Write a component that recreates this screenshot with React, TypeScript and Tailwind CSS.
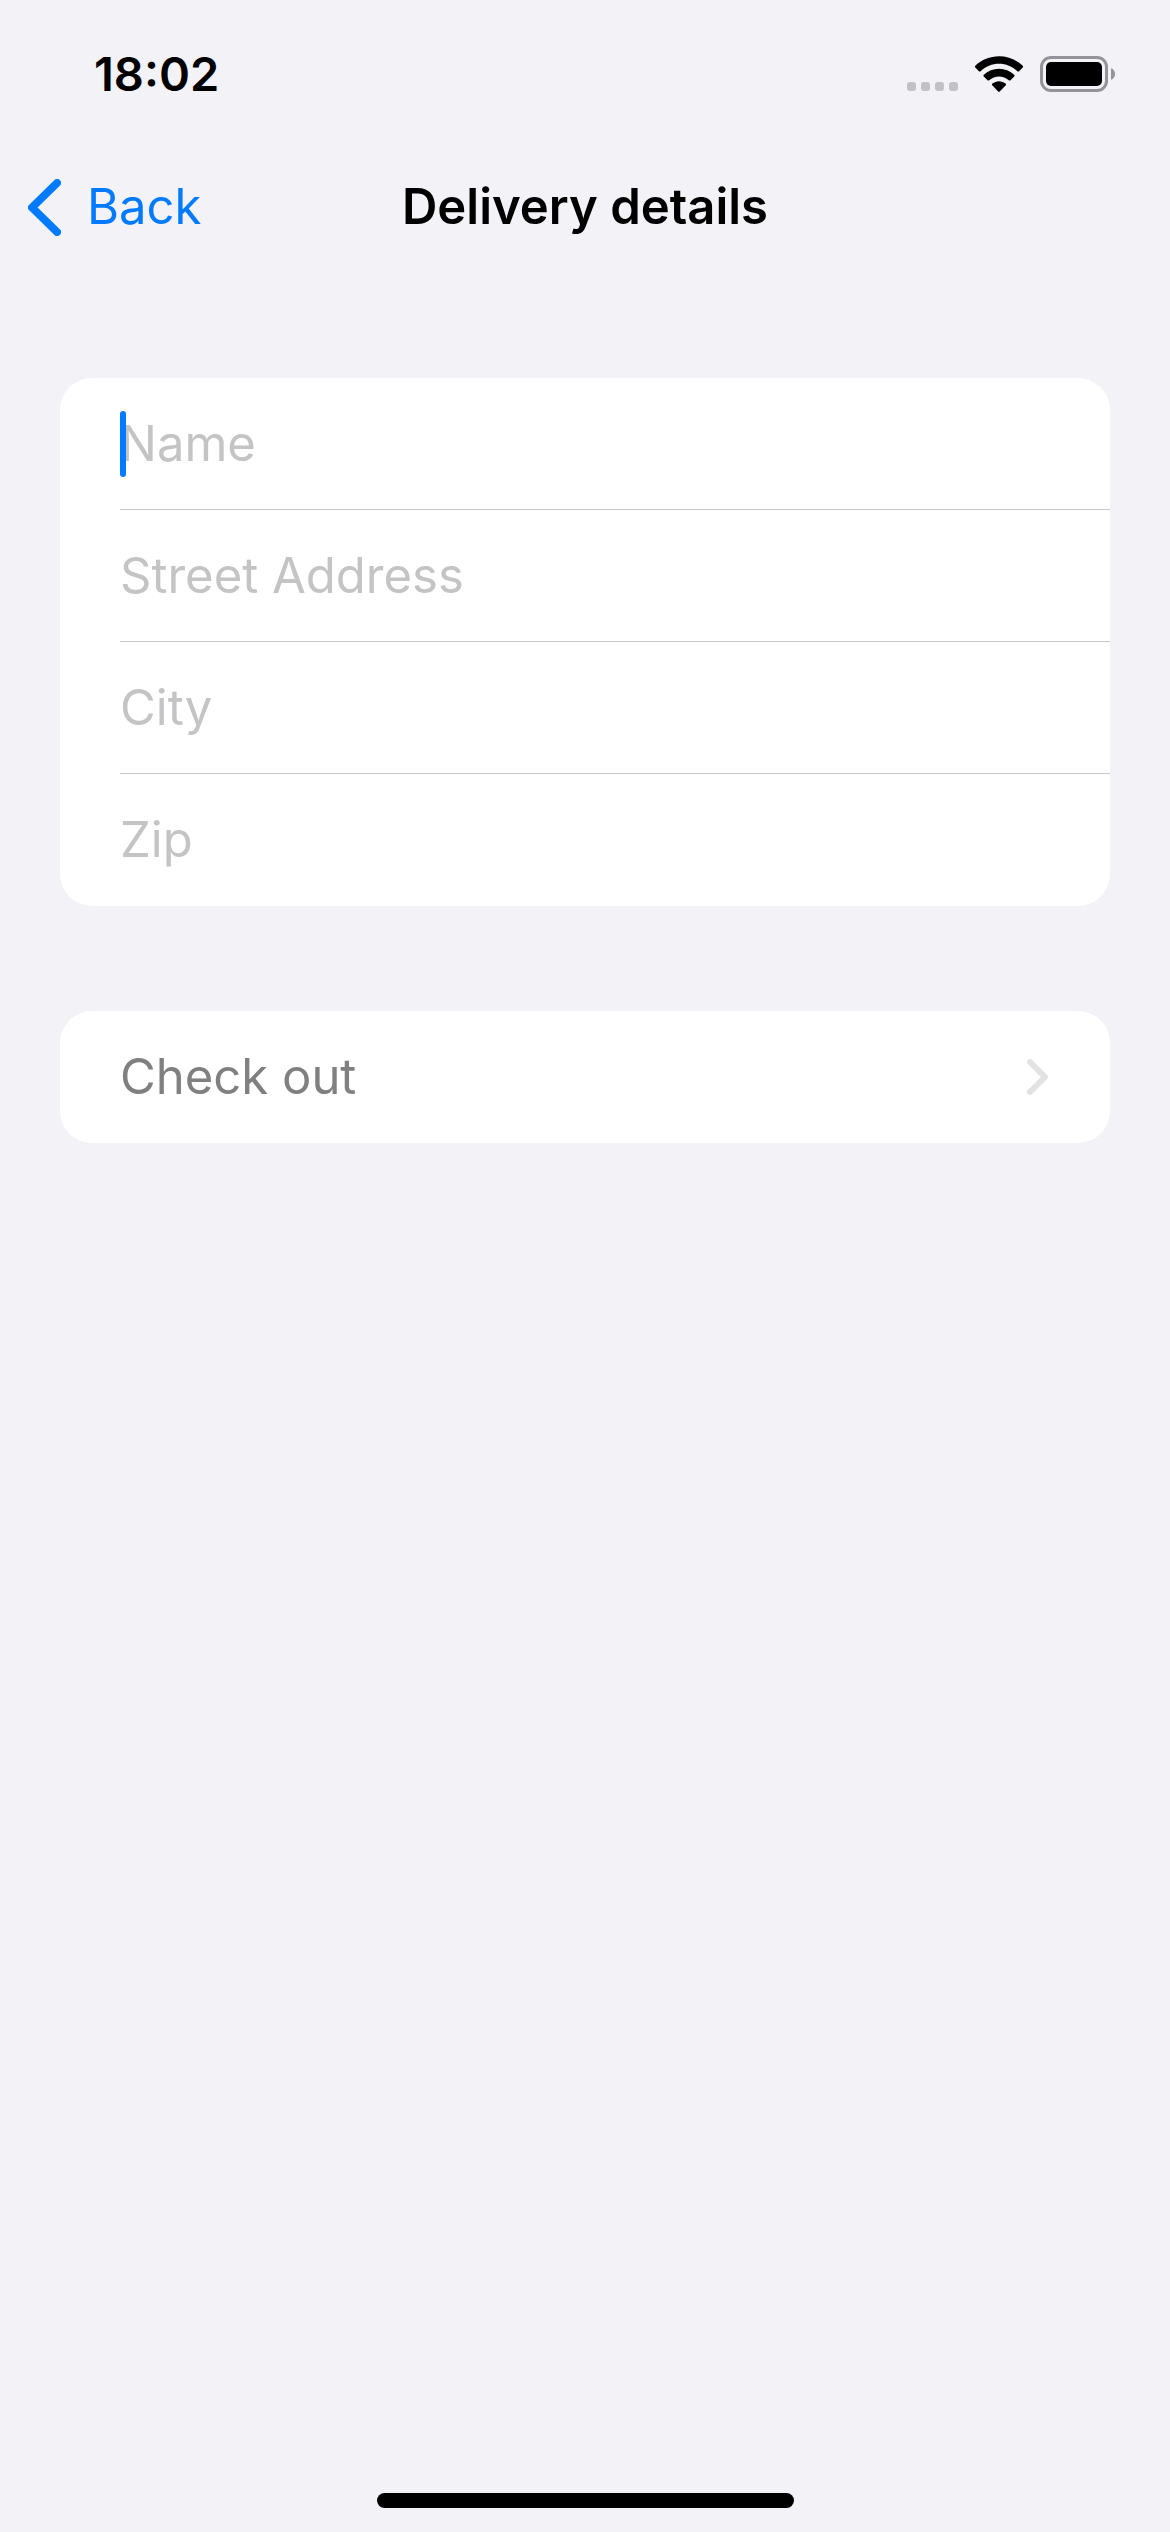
import { useState } from "react";

const fields = [
  { id: "name", label: "Name" },
  { id: "street", label: "Street Address" },
  { id: "city", label: "City" },
  { id: "zip", label: "Zip" },
];

function StatusBar() {
  return (
    <header className="flex h-[148px] items-center justify-between pl-[94px] pr-[54px]">
      <time className="text-[47px] leading-[58px] font-semibold">18:02</time>
      <div className="flex items-center">
        <svg width="52" height="36" viewBox="0 0 52 36" fill="#c2c1c6" className="mr-4" aria-label="No signal">
          <rect x="0" y="26" width="9" height="9" rx="3" />
          <rect x="14" y="26" width="9" height="9" rx="3" />
          <rect x="28" y="26" width="9" height="9" rx="3" />
          <rect x="42" y="26" width="9" height="9" rx="3" />
        </svg>
        <svg width="48" height="36" viewBox="0 0 48 36" className="mr-[17px]" aria-label="Wi-Fi">
          <path
            d="M24 0.2C33 0.2 41.400 3.600 47.700 9.700C48.200 10.200 48.200 11 47.700 11.500L44.100 15.200C43.600 15.700 42.900 15.700 42.400 15.200C37.300 10.400 30.900 7.800 24 7.800C17.100 7.800 10.700 10.400 5.600 15.200C5.100 15.700 4.400 15.700 3.900 15.200L0.300 11.500C-0.200 11-0.200 10.200 0.300 9.700C6.600 3.600 15 0.200 24 0.200Z"
          />
          <path d="M24 12.700C29.700 12.700 35.100 14.900 39.200 18.700C39.700 19.200 39.700 20 39.200 20.500L35.500 24.200C35 24.700 34.300 24.700 33.800 24.200C31.100 21.800 27.600 20.400 24 20.400C20.400 20.400 16.900 21.800 14.200 24.200C13.700 24.700 13 24.700 12.500 24.200L8.800 20.500C8.300 20 8.300 19.200 8.800 18.700C12.900 14.900 18.300 12.700 24 12.700Z" />
          <path d="M24 25.200C26.400 25.200 28.700 26.100 30.600 27.600C31.100 28.100 31.100 28.800 30.700 29.300L24.800 35.400C24.300 35.900 23.700 35.900 23.200 35.400L17.300 29.300C16.900 28.800 16.900 28.100 17.400 27.600C19.300 26.100 21.600 25.200 24 25.200Z" />
        </svg>
        <svg width="76" height="36" viewBox="0 0 76 36" aria-label="Battery full">
          <rect x="1.500" y="1.500" width="65" height="33" rx="9.500" fill="none" stroke="#949397" strokeWidth="3" />
          <rect x="6" y="6" width="56" height="24" rx="5" />
          <path d="M71 12.200C73.500 13 75 15.300 75 18C75 20.700 73.500 23 71 23.800Z" fill="#949397" />
        </svg>
      </div>
    </header>
  );
}

export default function App() {
  const [values, setValues] = useState<Record<string, string>>({});

  return (
    <div className="flex min-h-screen flex-col bg-[#f2f2f7] font-['Inter',sans-serif] text-[49px] leading-[60px] text-black">
      <StatusBar />

      <nav className="grid h-[118px] grid-cols-[1fr_auto_1fr] items-center">
        <button type="button" className="flex items-center gap-[26px] justify-self-start pl-7 text-[#007aff]">
          <svg width="33" height="57" viewBox="0 0 33 57" fill="none" stroke="currentColor" strokeWidth="8" strokeLinecap="round" strokeLinejoin="round" aria-hidden="true">
            <path d="M29 4L4 28.500L29 53" />
          </svg>
          Back
        </button>
        <h1 className="font-semibold">Delivery details</h1>
      </nav>

      <main className="flex flex-1 flex-col gap-[105px] px-[60px] pt-28">
        <form className="overflow-hidden rounded-[32px] bg-white pl-[60px]">
          {fields.map(({ id, label }, index) => (
            <div key={id} className="relative flex h-[132px] items-center border-b border-[#c6c6c8] last:border-b-0">
              <input
                id={id}
                type="text"
                aria-label={label}
                placeholder={label}
                value={values[id] ?? ""}
                onChange={(e) => setValues({ ...values, [id]: e.target.value })}
                className="w-full bg-transparent caret-[#007aff] outline-none placeholder:text-[#c4c4c6]"
              />
              {index === 0 && !values[id] && (
                <span className="absolute left-0 h-[66px] w-1.5 rounded-full bg-[#007aff]" aria-hidden="true" />
              )}
            </div>
          ))}
        </form>

        <button type="button" disabled className="flex h-[132px] items-center justify-between rounded-[32px] bg-white px-[60px] text-[#808080]">
          Check out
          <svg width="23" height="36" viewBox="0 0 23 36" fill="none" stroke="#e2e2e2" strokeWidth="6" strokeLinecap="round" strokeLinejoin="round" aria-hidden="true">
            <path d="M3 3L18 18L3 33" />
          </svg>
        </button>
      </main>

      <footer className="flex justify-center pb-6">
        <div className="h-[15px] w-[417px] rounded-full bg-black" />
      </footer>
    </div>
  );
}
